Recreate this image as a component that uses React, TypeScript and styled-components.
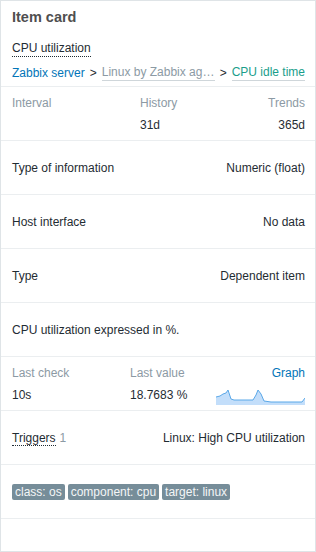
import React from "react";
import styled, { createGlobalStyle } from "styled-components";

const Global = createGlobalStyle`
  html, body { margin: 0; padding: 0; background: #ffffff; }
  body { font-family: "Liberation Sans", Arial, sans-serif; font-size: 12px; color: #1f2c33; }
  * { box-sizing: border-box; }
`;

const Card = styled.div`
  width: 316px;
  height: 552px;
  border: 1px solid #dfe4e7;
  background: #fff;
  display: flex;
  flex-direction: column;
`;

const Section = styled.div<{ $h?: number; $center?: boolean }>`
  height: ${(p) => p.$h ?? 54}px;
  flex-shrink: 0;
  border-bottom: 1px solid #ebeef0;
  padding: 0 10px 0 11px;
  display: flex;
  flex-direction: column;
  justify-content: ${(p) => (p.$center ? "center" : "flex-start")};
`;

const Header = styled(Section)`
  padding-top: 7px;
`;

const Title = styled.div`
  font-size: 14.5px;
  font-weight: bold;
  line-height: 18px;
  color: #4f4f4f;
`;

const ItemName = styled.div`
  margin-top: 15px;
  line-height: 14px;
  align-self: flex-start;
  border-bottom: 1px dotted #1f2c33;
  padding-bottom: 1px;
`;

const Crumbs = styled.div`
  margin-top: 8px;
  display: flex;
  align-items: center;
  white-space: nowrap;
  line-height: 14px;
`;

const Host = styled.span`
  color: #0275b8;
  flex-shrink: 0;
`;

const Sep = styled.span`
  margin: 0 5px;
  color: #1f2c33;
  flex-shrink: 0;
`;

const Crumb = styled.span<{ $color: string; $w?: number }>`
  color: ${(p) => p.$color};
  border-bottom: 1px solid #cfd6da;
  padding-bottom: 1px;
  overflow: hidden;
  text-overflow: ellipsis;
  display: inline-block;
  ${(p) => (p.$w ? `max-width: ${p.$w}px; flex-shrink: 1; min-width: 0;` : "flex-shrink: 0;")}
`;

const Grid = styled.div<{ $cols: string }>`
  display: grid;
  grid-template-columns: ${(p) => p.$cols};
  row-gap: 8px;
  padding-top: 9px;
  line-height: 14px;
`;

const Label = styled.div<{ $right?: boolean }>`
  color: #8c9aa4;
  text-align: ${(p) => (p.$right ? "right" : "left")};
`;

const Value = styled.div<{ $right?: boolean }>`
  text-align: ${(p) => (p.$right ? "right" : "left")};
`;

const GraphLink = styled.div`
  color: #0275b8;
  text-align: right;
`;

const Row = styled.div`
  display: flex;
  justify-content: space-between;
  align-items: center;
  line-height: 14px;
`;

const Dotted = styled.span`
  border-bottom: 1px dotted #1f2c33;
`;

const Count = styled.span`
  color: #8c9aa4;
  margin-left: 4px;
`;

const Tags = styled.div`
  display: flex;
  gap: 3px;
`;

const Tag = styled.span`
  background: #768d99;
  color: #f4f6f7;
  border-radius: 2px;
  padding: 0 3px;
  height: 16px;
  line-height: 16px;
`;

const Spark = () => (
  <svg width="89" height="22" viewBox="0 0 89 22" style={{ display: "block", marginTop: -5 }}>
    <path
      d="M0 14 L4 13 L7 11 L10 10 L12 7 L15 16 L18 17 L25 17 L37 17 L40 12 L42 7 L45 11 L48 18 L55 19 L70 19 L86 19 L89 15 L89 22 L0 22 Z"
      fill="#c3defa"
    />
    <path
      d="M0 14 L4 13 L7 11 L10 10 L12 7 L15 16 L18 17 L25 17 L37 17 L40 12 L42 7 L45 11 L48 18 L55 19 L70 19 L86 19 L89 15"
      fill="none"
      stroke="#5ba8e8"
      strokeWidth="1"
    />
  </svg>
);

export default function App() {
  return (
    <>
      <Global />
      <Card>
        <Header $h={86}>
          <Title>Item card</Title>
          <ItemName>CPU utilization</ItemName>
          <Crumbs>
            <Host>Zabbix server</Host>
            <Sep>&gt;</Sep>
            <Crumb $color="#8c9aa4" $w={114}>Linux by Zabbix agent</Crumb>
            <Sep>&gt;</Sep>
            <Crumb $color="#1a9e8b">CPU idle time</Crumb>
          </Crumbs>
        </Header>
        <Section>
          <Grid $cols="128px 1fr 1fr">
            <Label>Interval</Label>
            <Label>History</Label>
            <Label $right>Trends</Label>
            <Value></Value>
            <Value>31d</Value>
            <Value $right>365d</Value>
          </Grid>
        </Section>
        <Section $center>
          <Row>
            <span>Type of information</span>
            <span>Numeric (float)</span>
          </Row>
        </Section>
        <Section $center>
          <Row>
            <span>Host interface</span>
            <span>No data</span>
          </Row>
        </Section>
        <Section $center>
          <Row>
            <span>Type</span>
            <span>Dependent item</span>
          </Row>
        </Section>
        <Section $center>
          <Row>
            <span>CPU utilization expressed in %.</span>
          </Row>
        </Section>
        <Section>
          <Grid $cols="118px 86px 1fr">
            <Label>Last check</Label>
            <Label>Last value</Label>
            <GraphLink>Graph</GraphLink>
            <Value>10s</Value>
            <Value>18.7683 %</Value>
            <div>
              <Spark />
            </div>
          </Grid>
        </Section>
        <Section $center>
          <Row>
            <span>
              <Dotted>Triggers</Dotted>
              <Count>1</Count>
            </span>
            <span>Linux: High CPU utilization</span>
          </Row>
        </Section>
        <Section $center>
          <Tags>
            <Tag>class: os</Tag>
            <Tag>component: cpu</Tag>
            <Tag>target: linux</Tag>
          </Tags>
        </Section>
      </Card>
    </>
  );
}
